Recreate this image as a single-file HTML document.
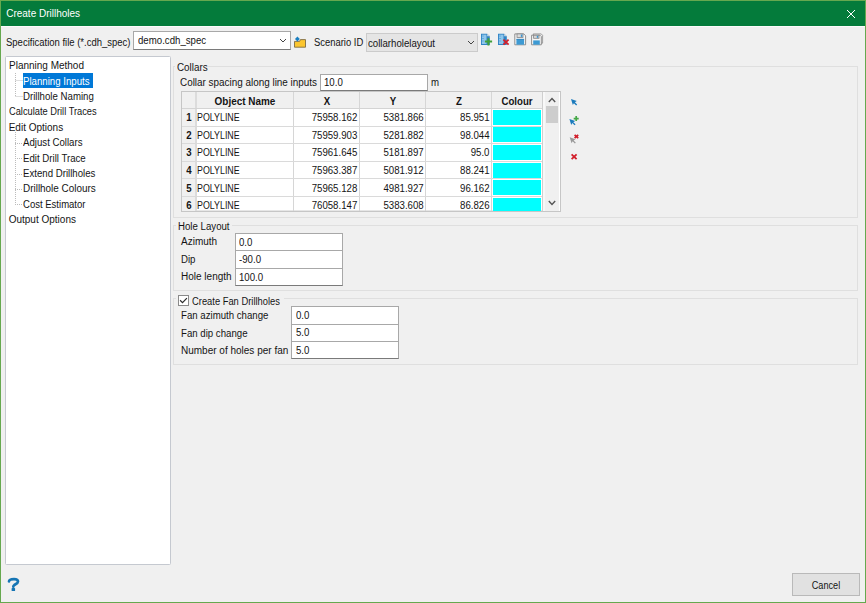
<!DOCTYPE html>
<html><head><meta charset="utf-8">
<style>
*{box-sizing:border-box;margin:0;padding:0}
html,body{width:866px;height:603px;overflow:hidden;background:#f0f0f0}
body{position:relative;font-family:"Liberation Sans",sans-serif;font-size:10.0px;color:#141414}
.a{position:absolute}
.t{position:absolute;line-height:12px;white-space:nowrap}
.b{font-weight:bold}
</style></head><body>
<div class="a" style="left:0px;top:0px;width:866px;height:603px;border:1px solid #66a84f;"></div>
<div class="a" style="left:1px;top:1px;width:864px;height:25px;background:#047b3b;"></div>
<div class="a" style="left:1px;top:26px;width:864px;height:1px;background:#fbfbfb;"></div>
<div class="t " style="top:8.00px;left:6.2px;transform-origin:0 50%;transform:scaleX(1.0);color:#fff;">Create Drillholes</div>
<svg class="a" style="left:846px;top:9px" width="10" height="10" viewBox="0 0 10 10"><path d="M1 1L9 9M9 1L1 9" stroke="#fff" stroke-width="1"/></svg>
<div class="t " style="top:37.00px;left:5.5px;transform-origin:0 50%;transform:scaleX(0.949);">Specification file (*.cdh_spec)</div>
<div class="a" style="left:133px;top:31px;width:158px;height:19px;background:#fff;border:1px solid #a8a8a8;border-bottom-color:#7a7a7a;"></div>
<div class="t " style="top:35.00px;left:138px;transform-origin:0 50%;transform:scaleX(0.965);">demo.cdh_spec</div>
<svg class="a" style="left:279px;top:38px" width="8" height="5" viewBox="0 0 8 5"><path d="M1 1L4 4L7 1" stroke="#444" fill="none"/></svg>
<svg class="a" style="left:290px;top:32px" width="20" height="18" viewBox="0 0 20 18">
<path d="M4.5 9.4H9.6L10.4 7.6H15.5V15.2H4.5Z" fill="#fcc62f" stroke="#7d6c45" stroke-width="0.9"/>
<path d="M7.4 4.4L9.8 6.9L7.4 9.4L5 6.9Z" fill="#1a7fc0"/></svg>
<div class="t " style="top:37.00px;left:313.5px;transform-origin:0 50%;transform:scaleX(0.942);">Scenario ID</div>
<div class="a" style="left:366px;top:33px;width:112px;height:19px;background:#e5e5e5;border:1px solid #cbcbcb;"></div>
<div class="t " style="top:38.00px;left:368.3px;transform-origin:0 50%;transform:scaleX(0.965);">collarholelayout</div>
<svg class="a" style="left:467px;top:40px" width="8" height="5" viewBox="0 0 8 5"><path d="M1 1L4 4L7 1" stroke="#444" fill="none"/></svg>
<svg class="a" style="left:480px;top:33px" width="14" height="14" viewBox="0 0 14 14">
<path d="M1 0.7H7.2L9.8 3.3V11.9H1Z" fill="#2f83c4"/>
<path d="M7.2 0.7V3.3H9.8Z" fill="#cfd8de"/>
<rect x="1.9" y="1.6" width="4.6" height="9.4" fill="#8fc6eb"/>
<path d="M2.4 3H3.6M2.4 5.5H3.6M2.4 8H3.6" stroke="#4b9ad4" stroke-width="1.1"/>
<path d="M4.9 8.6H12.1M8.45 5.2V12.5" stroke="#40a03a" stroke-width="2"/></svg>
<svg class="a" style="left:498px;top:33px" width="14" height="14" viewBox="0 0 14 14">
<path d="M0 0.7H6.2L8.8 3.3V11.9H0Z" fill="#2f83c4"/>
<path d="M6.2 0.7V3.3H8.8Z" fill="#cfd8de"/>
<rect x="0.9" y="1.6" width="4.6" height="9.4" fill="#8fc6eb"/>
<path d="M1.4 3H2.6M1.4 5.5H2.6M1.4 8H2.6" stroke="#4b9ad4" stroke-width="1.1"/>
<path d="M5.4 6.7L10.6 11.7M10.6 6.7L5.4 11.7" stroke="#d2202b" stroke-width="1.8"/></svg>
<svg class="a" style="left:514px;top:33px" width="13" height="13" viewBox="0 0 13 13">
<path d="M0.8 0.9H9.8L11.6 2.8V11.8H0.8Z" fill="#f7f7f7" stroke="#858585" stroke-width="0.9"/>
<rect x="3" y="0.9" width="6" height="3.6" fill="#dcdcdc" stroke="#858585" stroke-width="0.8"/>
<rect x="6.8" y="1.5" width="1.6" height="2.4" fill="#3b94d0"/>
<rect x="2.4" y="6.1" width="7.7" height="5.6" fill="#3d9ad3"/>
<path d="M2.4 6.3H10.1" stroke="#2d7fb8" stroke-width="0.8"/></svg>
<svg class="a" style="left:531px;top:33px" width="13" height="13" viewBox="0 0 13 13">
<path d="M2.3 0.9H10.2L11.6 2.3V10.2H2.3Z" fill="#efefef" stroke="#8a8a8a" stroke-width="0.8"/>
<path d="M0.6 2.2H9L10.3 3.5V11.8H0.6Z" fill="#f7f7f7" stroke="#858585" stroke-width="0.9"/>
<rect x="2.6" y="2.2" width="5.4" height="3.1" fill="#d6d6d6" stroke="#858585" stroke-width="0.8"/>
<rect x="5.8" y="2.8" width="1.4" height="2" fill="#3b94d0"/>
<rect x="2.2" y="7.4" width="6.6" height="4.3" fill="#3d9ad3"/></svg>
<div class="a" style="left:5px;top:56px;width:166px;height:509px;background:#fff;border:1px solid #c5c9d0;border-radius:1.5px;"></div>
<div class="a" style="left:23px;top:73px;width:70px;height:15px;background:#0078d7;"></div>
<div class="t " style="top:60.00px;left:8.7px;transform-origin:0 50%;transform:scaleX(0.999);">Planning Method</div>
<div class="t " style="top:76.00px;left:23.4px;transform-origin:0 50%;transform:scaleX(0.965);color:#fff;">Planning Inputs</div>
<div class="t " style="top:91.00px;left:23.4px;transform-origin:0 50%;transform:scaleX(0.965);">Drillhole Naming</div>
<div class="t " style="top:106.00px;left:8.7px;transform-origin:0 50%;transform:scaleX(0.928);">Calculate Drill Traces</div>
<div class="t " style="top:122.00px;left:8.7px;transform-origin:0 50%;transform:scaleX(1.0);">Edit Options</div>
<div class="t " style="top:137.00px;left:23.4px;transform-origin:0 50%;transform:scaleX(0.965);">Adjust Collars</div>
<div class="t " style="top:153.00px;left:23.4px;transform-origin:0 50%;transform:scaleX(0.965);">Edit Drill Trace</div>
<div class="t " style="top:168.00px;left:23.4px;transform-origin:0 50%;transform:scaleX(0.965);">Extend Drillholes</div>
<div class="t " style="top:183.00px;left:23.4px;transform-origin:0 50%;transform:scaleX(0.992);">Drillhole Colours</div>
<div class="t " style="top:199.00px;left:23.4px;transform-origin:0 50%;transform:scaleX(0.953);">Cost Estimator</div>
<div class="t " style="top:214.00px;left:8.7px;transform-origin:0 50%;transform:scaleX(1.0);">Output Options</div>
<svg class="a" style="left:0;top:0" width="30" height="230">
<g stroke="#bcbcbc" stroke-width="1" stroke-dasharray="1 1" fill="none">
<path d="M15.5 73V97M15.5 80.5H23M15.5 96.5H23"/>
<path d="M15.5 132V205M15 143.5H23M15 158.5H23M15 174.5H23M15 189.5H23M15 204.5H23"/>
</g></svg>
<div class="a" style="left:173px;top:66px;width:685px;height:152px;border:1px solid #dfdfdf;"></div>
<div class="a" style="left:175px;top:60px;width:33px;height:10px;background:#f0f0f0;"></div>
<div class="t " style="top:62.00px;left:176.6px;transform-origin:0 50%;transform:scaleX(0.985);">Collars</div>
<div class="t " style="top:77.00px;left:180.4px;transform-origin:0 50%;transform:scaleX(0.99);">Collar spacing along line inputs</div>
<div class="a" style="left:320px;top:74px;width:108px;height:17px;background:#fff;border:1px solid #a8a8a8;border-bottom-color:#7a7a7a;"></div>
<div class="t " style="top:77.00px;left:324px;transform-origin:0 50%;transform:scaleX(0.965);">10.0</div>
<div class="t " style="top:77.00px;left:430.5px;transform-origin:0 50%;transform:scaleX(0.965);">m</div>
<div class="a" style="left:181px;top:91px;width:380px;height:121px;background:#fff;border:1px solid #c6c6c6;"></div>
<div class="a" style="left:182px;top:92px;width:377px;height:119px;border:1px solid #e6e6e6;"></div>
<div class="a" style="left:182px;top:92px;width:360px;height:17px;background:#f0f0f0;"></div>
<div class="a" style="left:182px;top:109px;width:13px;height:102px;background:#f0f0f0;"></div>
<div class="a" style="left:195px;top:92px;width:2px;height:119px;background:#dcdcdc;"></div>
<div class="a" style="left:293px;top:92px;width:1px;height:119px;background:#d6d6d6;"></div>
<div class="a" style="left:359px;top:92px;width:1px;height:119px;background:#d6d6d6;"></div>
<div class="a" style="left:425px;top:92px;width:1px;height:119px;background:#d6d6d6;"></div>
<div class="a" style="left:491px;top:92px;width:1px;height:119px;background:#d6d6d6;"></div>
<div class="a" style="left:542px;top:92px;width:1px;height:119px;background:#cfcfcf;"></div>
<div class="a" style="left:182px;top:108px;width:360px;height:1px;background:#d4d4d4;"></div>
<div class="a" style="left:182px;top:126px;width:360px;height:1px;background:#dadada;"></div>
<div class="a" style="left:182px;top:143px;width:360px;height:1px;background:#dadada;"></div>
<div class="a" style="left:182px;top:161px;width:360px;height:1px;background:#dadada;"></div>
<div class="a" style="left:182px;top:178px;width:360px;height:1px;background:#dadada;"></div>
<div class="a" style="left:182px;top:196px;width:360px;height:1px;background:#dadada;"></div>
<div class="t b" style="top:96.00px;left:145.0px;width:200px;text-align:center;transform-origin:50% 50%;transform:scaleX(0.995);">Object Name</div>
<div class="t b" style="top:96.00px;left:227.0px;width:200px;text-align:center;transform-origin:50% 50%;transform:scaleX(0.965);">X</div>
<div class="t b" style="top:96.00px;left:293.0px;width:200px;text-align:center;transform-origin:50% 50%;transform:scaleX(0.965);">Y</div>
<div class="t b" style="top:96.00px;left:359.0px;width:200px;text-align:center;transform-origin:50% 50%;transform:scaleX(0.965);">Z</div>
<div class="t b" style="top:96.00px;left:416.5px;width:200px;text-align:center;transform-origin:50% 50%;transform:scaleX(0.965);">Colour</div>
<div class="t b" style="top:112.00px;left:89.19999999999999px;width:200px;text-align:center;transform-origin:50% 50%;transform:scaleX(0.965);">1</div>
<div class="t " style="top:112.00px;left:197px;transform-origin:0 50%;transform:scaleX(0.885);">POLYLINE</div>
<div class="t " style="top:112.00px;right:508.5px;transform-origin:100% 50%;transform:scaleX(0.965);">75958.162</div>
<div class="t " style="top:112.00px;right:442.5px;transform-origin:100% 50%;transform:scaleX(0.965);">5381.866</div>
<div class="t " style="top:112.00px;right:376.5px;transform-origin:100% 50%;transform:scaleX(0.965);">85.951</div>
<div class="a" style="left:493px;top:110px;width:48px;height:15px;background:#00ffff;"></div>
<div class="t b" style="top:130.00px;left:89.19999999999999px;width:200px;text-align:center;transform-origin:50% 50%;transform:scaleX(0.965);">2</div>
<div class="t " style="top:130.00px;left:197px;transform-origin:0 50%;transform:scaleX(0.885);">POLYLINE</div>
<div class="t " style="top:130.00px;right:508.5px;transform-origin:100% 50%;transform:scaleX(0.965);">75959.903</div>
<div class="t " style="top:130.00px;right:442.5px;transform-origin:100% 50%;transform:scaleX(0.965);">5281.882</div>
<div class="t " style="top:130.00px;right:376.5px;transform-origin:100% 50%;transform:scaleX(0.965);">98.044</div>
<div class="a" style="left:493px;top:127px;width:48px;height:15px;background:#00ffff;"></div>
<div class="t b" style="top:147.00px;left:89.19999999999999px;width:200px;text-align:center;transform-origin:50% 50%;transform:scaleX(0.965);">3</div>
<div class="t " style="top:147.00px;left:197px;transform-origin:0 50%;transform:scaleX(0.885);">POLYLINE</div>
<div class="t " style="top:147.00px;right:508.5px;transform-origin:100% 50%;transform:scaleX(0.965);">75961.645</div>
<div class="t " style="top:147.00px;right:442.5px;transform-origin:100% 50%;transform:scaleX(0.965);">5181.897</div>
<div class="t " style="top:147.00px;right:376.5px;transform-origin:100% 50%;transform:scaleX(0.965);">95.0</div>
<div class="a" style="left:493px;top:145px;width:48px;height:15px;background:#00ffff;"></div>
<div class="t b" style="top:165.00px;left:89.19999999999999px;width:200px;text-align:center;transform-origin:50% 50%;transform:scaleX(0.965);">4</div>
<div class="t " style="top:165.00px;left:197px;transform-origin:0 50%;transform:scaleX(0.885);">POLYLINE</div>
<div class="t " style="top:165.00px;right:508.5px;transform-origin:100% 50%;transform:scaleX(0.965);">75963.387</div>
<div class="t " style="top:165.00px;right:442.5px;transform-origin:100% 50%;transform:scaleX(0.965);">5081.912</div>
<div class="t " style="top:165.00px;right:376.5px;transform-origin:100% 50%;transform:scaleX(0.965);">88.241</div>
<div class="a" style="left:493px;top:163px;width:48px;height:15px;background:#00ffff;"></div>
<div class="t b" style="top:183.00px;left:89.19999999999999px;width:200px;text-align:center;transform-origin:50% 50%;transform:scaleX(0.965);">5</div>
<div class="t " style="top:183.00px;left:197px;transform-origin:0 50%;transform:scaleX(0.885);">POLYLINE</div>
<div class="t " style="top:183.00px;right:508.5px;transform-origin:100% 50%;transform:scaleX(0.965);">75965.128</div>
<div class="t " style="top:183.00px;right:442.5px;transform-origin:100% 50%;transform:scaleX(0.965);">4981.927</div>
<div class="t " style="top:183.00px;right:376.5px;transform-origin:100% 50%;transform:scaleX(0.965);">96.162</div>
<div class="a" style="left:493px;top:180px;width:48px;height:15px;background:#00ffff;"></div>
<div class="t b" style="top:200.00px;left:89.19999999999999px;width:200px;text-align:center;transform-origin:50% 50%;transform:scaleX(0.965);">6</div>
<div class="t " style="top:200.00px;left:197px;transform-origin:0 50%;transform:scaleX(0.885);">POLYLINE</div>
<div class="t " style="top:200.00px;right:508.5px;transform-origin:100% 50%;transform:scaleX(0.965);">76058.147</div>
<div class="t " style="top:200.00px;right:442.5px;transform-origin:100% 50%;transform:scaleX(0.965);">5383.608</div>
<div class="t " style="top:200.00px;right:376.5px;transform-origin:100% 50%;transform:scaleX(0.965);">86.826</div>
<div class="a" style="left:493px;top:198px;width:48px;height:13px;background:#00ffff;"></div>
<div class="a" style="left:543px;top:92px;width:16px;height:119px;background:#f0f0f0;"></div>
<div class="a" style="left:543px;top:92px;width:2px;height:119px;background:#f8f8f8;"></div>
<svg class="a" style="left:547px;top:95px" width="10" height="9" viewBox="0 0 10 9"><path d="M1.8 7L5 3.6L8.2 7" stroke="#555" fill="none" stroke-width="1.4"/></svg>
<div class="a" style="left:545.5px;top:106px;width:12.5px;height:17px;background:#cdcdcd;"></div>
<svg class="a" style="left:547px;top:198px" width="10" height="9" viewBox="0 0 10 9"><path d="M1.8 3L5 6.4L8.2 3" stroke="#555" fill="none" stroke-width="1.4"/></svg>
<svg class="a" style="left:562px;top:92px" width="24" height="72" viewBox="0 0 24 72">
<path transform="translate(9,7) scale(0.88)" d="M0 0L6.6 2.3L4.4 3.7L7 6.2L5.9 7.3L3.3 4.7L2.1 6.9Z" fill="#1b7bbd"/>
<path transform="translate(7.4,26.9) scale(0.88)" d="M0 0L6.6 2.3L4.4 3.7L7 6.2L5.9 7.3L3.3 4.7L2.1 6.9Z" fill="#1b7bbd"/>
<path d="M14.3 23.5H16.8V21H14.3ZM12 23.5H19.2" stroke="none" fill="none"/>
<path d="M11.7 26.6H16.7M14.2 24.1V29.1" stroke="#45a847" stroke-width="1.7"/>
<path transform="translate(7.7,45.2) scale(0.88)" d="M0 0L6.6 2.3L4.4 3.7L7 6.2L5.9 7.3L3.3 4.7L2.1 6.9Z" fill="#9a9a9a"/>
<path d="M12.6 42.9L16.2 46.2M16.2 42.9L12.6 46.2" stroke="#d21f2b" stroke-width="1.8"/>
<path d="M9.6 62.4L14.6 67.2M14.6 62.4L9.6 67.2" stroke="#d21f2b" stroke-width="1.8"/>
</svg>
<div class="a" style="left:173px;top:225px;width:685px;height:66px;border:1px solid #dfdfdf;"></div>
<div class="a" style="left:176px;top:219px;width:56px;height:10px;background:#f0f0f0;"></div>
<div class="t " style="top:221.00px;left:177.6px;transform-origin:0 50%;transform:scaleX(0.966);">Hole Layout</div>
<div class="t " style="top:236.00px;left:181px;transform-origin:0 50%;transform:scaleX(1.0);">Azimuth</div>
<div class="t " style="top:254.00px;left:181px;transform-origin:0 50%;transform:scaleX(0.965);">Dip</div>
<div class="t " style="top:271.00px;left:181px;transform-origin:0 50%;transform:scaleX(1.0);">Hole length</div>
<div class="a" style="left:235px;top:233px;width:108px;height:18px;background:#fff;border:1px solid #a8a8a8;border-bottom-color:#7a7a7a;"></div>
<div class="a" style="left:235px;top:250px;width:108px;height:18.5px;background:#fff;border:1px solid #a8a8a8;border-bottom-color:#7a7a7a;"></div>
<div class="a" style="left:235px;top:267.5px;width:108px;height:18px;background:#fff;border:1px solid #a8a8a8;border-bottom-color:#7a7a7a;"></div>
<div class="t " style="top:237.00px;left:238.8px;transform-origin:0 50%;transform:scaleX(0.965);">0.0</div>
<div class="t " style="top:254.00px;left:238.8px;transform-origin:0 50%;transform:scaleX(0.965);">-90.0</div>
<div class="t " style="top:272.00px;left:238.8px;transform-origin:0 50%;transform:scaleX(0.965);">100.0</div>
<div class="a" style="left:173px;top:298px;width:685px;height:67px;border:1px solid #dfdfdf;"></div>
<div class="a" style="left:176px;top:292px;width:108px;height:12px;background:#f0f0f0;"></div>
<div class="a" style="left:178px;top:295px;width:11px;height:11px;background:#fff;border:1px solid #8a8a8a;"></div>
<svg class="a" style="left:178px;top:295px" width="12" height="12" viewBox="0 0 12 12"><path d="M2.1 5.3L4.5 7.6L8.9 3.1" stroke="#2a2a2a" fill="none" stroke-width="1.2"/></svg>
<div class="t " style="top:296.00px;left:192px;transform-origin:0 50%;transform:scaleX(0.936);">Create Fan Drillholes</div>
<div class="t " style="top:310.00px;left:181px;transform-origin:0 50%;transform:scaleX(0.965);">Fan azimuth change</div>
<div class="t " style="top:328.00px;left:181px;transform-origin:0 50%;transform:scaleX(0.965);">Fan dip change</div>
<div class="t " style="top:345.00px;left:181px;transform-origin:0 50%;transform:scaleX(1.0);">Number of holes per fan</div>
<div class="a" style="left:291px;top:306px;width:108px;height:18.5px;background:#fff;border:1px solid #a8a8a8;border-bottom-color:#7a7a7a;"></div>
<div class="a" style="left:291px;top:323.5px;width:108px;height:18.5px;background:#fff;border:1px solid #a8a8a8;border-bottom-color:#7a7a7a;"></div>
<div class="a" style="left:291px;top:341px;width:108px;height:18px;background:#fff;border:1px solid #a8a8a8;border-bottom-color:#7a7a7a;"></div>
<div class="t " style="top:310.00px;left:296px;transform-origin:0 50%;transform:scaleX(0.965);">0.0</div>
<div class="t " style="top:327.00px;left:296px;transform-origin:0 50%;transform:scaleX(0.965);">5.0</div>
<div class="t " style="top:345.00px;left:296px;transform-origin:0 50%;transform:scaleX(0.965);">5.0</div>
<svg class="a" style="left:4px;top:574px" width="20" height="20" viewBox="0 0 20 20"><path d="M5 7.4C5.2 5.4 7.2 5.1 10 5.1C13 5.1 14 6.3 14 7.6C14 9.3 12 9.9 10.3 11C9.6 11.5 9.3 12 9.3 12.7" stroke="#1675b4" stroke-width="2.7" fill="none" stroke-linecap="round"/><rect x="7.6" y="14.1" width="3.5" height="3" rx="0.6" fill="#1675b4"/></svg>
<div class="a" style="left:792px;top:573px;width:68px;height:23px;background:#e1e1e1;border:1px solid #b9b9b9;"></div>
<div class="t " style="top:580.00px;left:726px;width:200px;text-align:center;transform-origin:50% 50%;transform:scaleX(0.913);">Cancel</div>
</body></html>
